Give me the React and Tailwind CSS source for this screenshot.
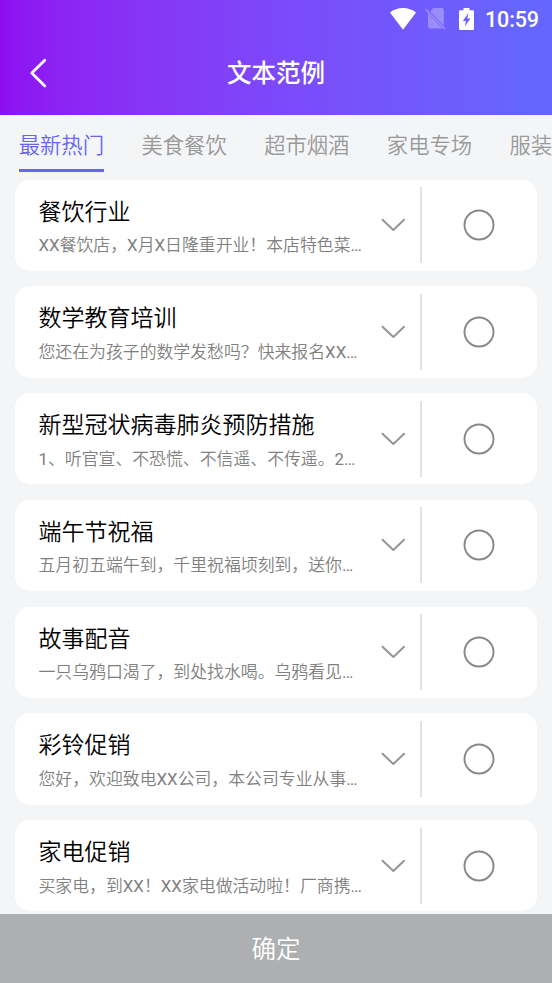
const tabs = ['最新热门', '美食餐饮', '超市烟酒', '家电专场', '服装'];

const samples = [
  { title: '餐饮行业', text: 'XX餐饮店，X月X日隆重开业！本店特色菜…' },
  { title: '数学教育培训', text: '您还在为孩子的数学发愁吗？快来报名XX…' },
  { title: '新型冠状病毒肺炎预防措施', text: '1、听官宣、不恐慌、不信遥、不传遥。2…' },
  { title: '端午节祝福', text: '五月初五端午到，千里祝福顷刻到，送你…' },
  { title: '故事配音', text: '一只乌鸦口渴了，到处找水喝。乌鸦看见…' },
  { title: '彩铃促销', text: '您好，欢迎致电XX公司，本公司专业从事…' },
  { title: '家电促销', text: '买家电，到XX！XX家电做活动啦！厂商携…' },
];

function StatusBar() {
  return (
    <div className="flex h-[37px] items-center justify-end pr-[13px] text-white">
      <svg width="26" height="22" viewBox="0 0 26 22" className="mr-[9px]" fill="currentColor">
        <path d="M0 4.6C3.6 1.6 8 0 13 0s9.4 1.600 13 4.600L13 21.700z" />
      </svg>
      <svg width="21" height="23" viewBox="0 0 21 23" className="mr-[13px] opacity-30" fill="currentColor">
        <path d="M8.300 1h8.700a1.800 1.800 0 0 1 1.800 1.800v16L5.200 4.500z" />
        <path d="M3 6.300 17.600 21.400H4.800A1.800 1.800 0 0 1 3 19.600z" />
        <path d="M.8 2.400 20 22" fill="none" stroke="currentColor" strokeWidth="1.600" />
      </svg>
      <svg width="15" height="22" viewBox="0 0 15 22" className="mr-[11px]" fill="currentColor">
        <path
          fillRule="evenodd"
          d="M4.500 0h6v2.200H14a1 1 0 0 1 1 1V21a1 1 0 0 1-1 1H1a1 1 0 0 1-1-1V3.200a1 1 0 0 1 1-1h3.500zM9.500 5 3.800 13h3.200L5.800 18.500 11.400 10.500H8.300z"
        />
      </svg>
      <span className="mt-[2px] text-[21.500px] leading-none font-medium tracking-[-0.100px]">10:59</span>
    </div>
  );
}

function SampleCard({ title, text }) {
  return (
    <li className="flex h-[91.250px] shrink-0 rounded-[15px] bg-white">
      <div className="flex w-[358px] shrink-0 flex-col pt-[16px] pl-[23.200px] whitespace-nowrap">
        <h2 className="text-[23px] leading-[34px] font-[350] text-black">{title}</h2>
        <p className="mt-[3.600px] font-[Roboto,'Noto_Sans_CJK_SC_DemiLight','Noto_Sans_CJK_SC',sans-serif] text-[16.870px] leading-[25px] text-[#808080]">
          {text}
        </p>
      </div>
      <div className="flex w-[46.700px] shrink-0 items-center pl-[8px]">
        <svg width="24" height="14" viewBox="0 0 24 14" fill="none" stroke="#959595" strokeWidth="2" strokeLinecap="round" strokeLinejoin="round">
          <path d="M1.500 1.700 12.400 12 23 1.700" />
        </svg>
      </div>
      <div className="my-auto h-[76px] w-[2px] bg-[#e2e2e2]" />
      <div className="flex flex-1 items-center justify-center">
        <svg width="32" height="32" viewBox="0 0 32 32" fill="none" stroke="#888888" strokeWidth="1.900">
          <circle cx="16" cy="16" r="14.500" />
        </svg>
      </div>
    </li>
  );
}

export default function App() {
  return (
    <div className="flex h-[983px] w-[552px] flex-col overflow-hidden bg-[#f4f5f7] font-[Roboto,'Noto_Sans_CJK_SC',sans-serif]">
      <header className="h-[115px] shrink-0 bg-linear-to-r from-[#8f0df2] to-[#6565ff] to-95%">
        <StatusBar />
        <div className="grid h-[72px] grid-cols-[80px_1fr_80px] items-center text-white">
          <svg width="18" height="30" viewBox="0 0 18 30" className="ml-[29px]" fill="none" stroke="currentColor" strokeWidth="2.700" strokeLinecap="round" strokeLinejoin="round">
            <path d="M15.800 2.200 2.800 15 15.800 28" />
          </svg>
          <h1 className="pt-[2px] text-center text-[24.500px] leading-9 font-medium">文本范例</h1>
        </div>
      </header>

      <nav className="flex h-[57px] shrink-0 gap-[37.400px] pl-[18.700px] text-[21.330px] font-[350] whitespace-nowrap">
        {tabs.map((tab, i) => (
          <div
            key={tab}
            className={
              i === 0
                ? 'shrink-0 border-b-[3px] border-[#6767e8] pt-[15px] leading-[32px] text-[#6767e8]'
                : 'shrink-0 pt-[15px] leading-[32px] text-[#999999]'
            }
          >
            {tab}
          </div>
        ))}
      </nav>

      <ul className="flex min-h-0 flex-1 flex-col gap-[15.500px] overflow-hidden px-[15.300px] pt-[7.500px]">
        {samples.map((sample) => (
          <SampleCard key={sample.title} {...sample} />
        ))}
      </ul>

      <button className="flex h-[69px] shrink-0 items-center justify-center bg-[#aeafb1] pt-[4px] text-[24.500px] font-[350] text-white">
        确定
      </button>
    </div>
  );
}
